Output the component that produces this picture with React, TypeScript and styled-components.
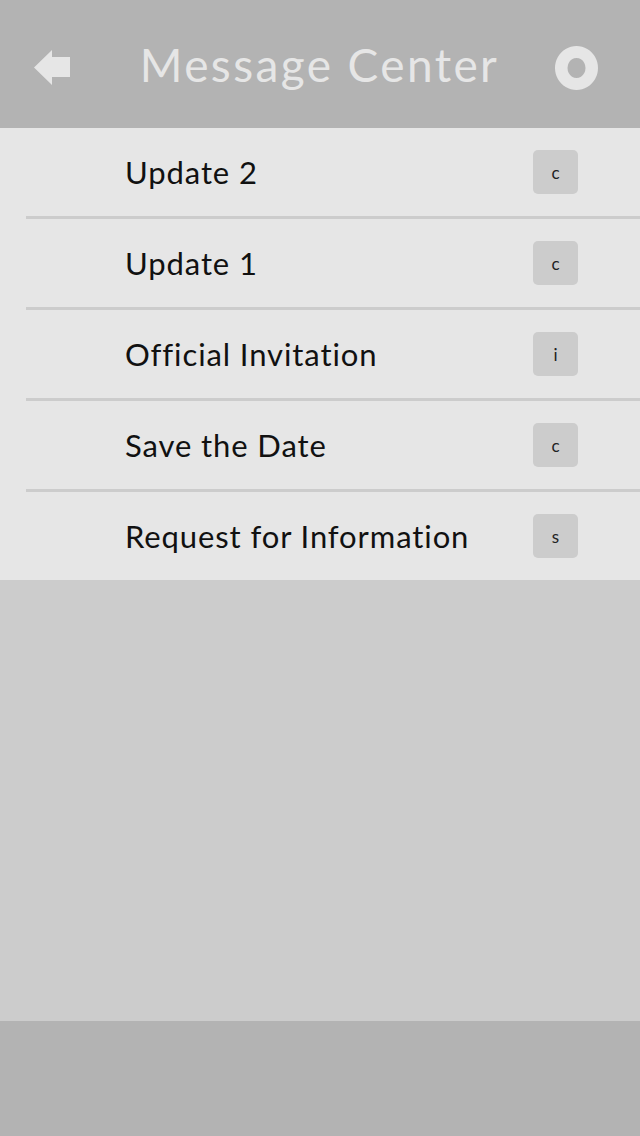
import React from "react";
import styled, { createGlobalStyle } from "styled-components";

const Global = createGlobalStyle`
  html, body { margin: 0; padding: 0; }
  body { background: #cccccc; font-family: "Lato", "Noto Sans", sans-serif; }
  #root { min-height: 1136px; }
`;

const Screen = styled.div`
  width: 640px;
  height: 1136px;
  display: flex;
  flex-direction: column;
  background: #cccccc;
`;

const Header = styled.header`
  height: 128px;
  flex: none;
  background: #b3b3b3;
  display: flex;
  align-items: center;
  justify-content: space-between;
  padding: 8px 42px 0 34px;
  box-sizing: border-box;
`;

const IconButton = styled.button`
  border: 0;
  background: none;
  padding: 0;
  margin: 0;
  display: flex;
  align-items: center;
  justify-content: center;
`;

const Title = styled.h1`
  margin: 0 0 0 14px;
  font-family: "Lato", "Noto Sans", sans-serif;
  font-weight: 400;
  font-size: 46px;
  color: #e6e6e6;
  letter-spacing: 2.4px;
  transform: translateY(-4px);
`;

const List = styled.ul`
  list-style: none;
  margin: 0;
  padding: 0;
  background: #e6e6e6;
  flex: none;
`;

const Row = styled.li<{ $last?: boolean }>`
  height: 88px;
  display: flex;
  align-items: center;
  margin-left: 26px;
  padding: 0 62px 0 99px;
  border-bottom: ${(p) => (p.$last ? "none" : "3px solid #cccccc")};
`;

const Label = styled.span`
  flex: 1;
  font-size: 31px;
  color: #111111;
  letter-spacing: 0.9px;
`;

const Badge = styled.span`
  width: 45px;
  height: 44px;
  border-radius: 5px;
  background: #cccccc;
  display: flex;
  align-items: center;
  justify-content: center;
  font-size: 17px;
  font-weight: 400;
  color: #222222;
`;

const Body = styled.div`
  flex: 1;
  background: #cccccc;
`;

const Footer = styled.footer`
  height: 115px;
  flex: none;
  background: #b3b3b3;
`;

const items = [
  { label: "Update 2", tag: "c" },
  { label: "Update 1", tag: "c" },
  { label: "Official Invitation", tag: "i" },
  { label: "Save the Date", tag: "c" },
  { label: "Request for Information", tag: "s" },
];

export default function App() {
  return (
    <>
      <Global />
      <Screen>
        <Header>
          <IconButton aria-label="Back">
            <svg width="36" height="36" viewBox="0 0 36 36">
              <path d="M0 17.5 L18 0 L18 7 L36 7 L36 27 L18 27 L18 35 Z" fill="#e6e6e6" />
            </svg>
          </IconButton>
          <Title>Message Center</Title>
          <IconButton aria-label="Settings">
            <svg width="43" height="44" viewBox="0 0 43 44">
              <path
                fillRule="evenodd"
                d="M21.5 0 A21.5 22 0 1 1 21.49 0 Z M21.5 12 A9 10 0 1 0 21.51 12 Z"
                fill="#e6e6e6"
              />
            </svg>
          </IconButton>
        </Header>
        <List>
          {items.map((it, i) => (
            <Row key={it.label} $last={i === items.length - 1}>
              <Label>{it.label}</Label>
              <Badge>{it.tag}</Badge>
            </Row>
          ))}
        </List>
        <Body />
        <Footer />
      </Screen>
    </>
  );
}
